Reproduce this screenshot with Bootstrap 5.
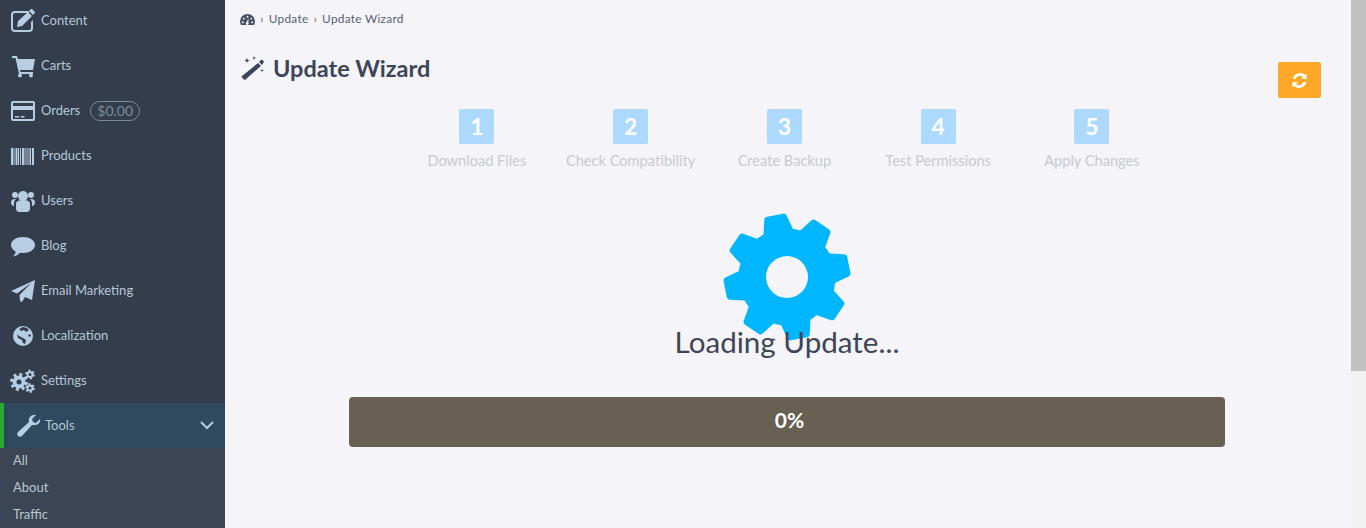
<!DOCTYPE html>
<html>
<head>
    <title>Update Wizard</title>
    <link href="https://cdn.jsdelivr.net/npm/bootstrap@5.3.0/dist/css/bootstrap.min.css" rel="stylesheet">
    <style>
        html, body { height: 528px; overflow: hidden; }
        body { font-family: "Lato", "Noto Sans", sans-serif; background: #f4f4f9; color: #3f4654; font-size: 13px; }
        .app-shell { height: 528px; }
        .side-menu { width: 225px; background: #333d4b; flex-shrink: 0; overflow: hidden; padding-top: 0; }
        .side-link { height: 45px; color: #b6c8da; font-size: 13px; padding-left: 10px; text-decoration: none; }
        .side-link:first-child { margin-top: -2px; }
        .side-link svg { width: 26px; height: 24px; fill: #b6cde3; margin-right: 5px; flex-shrink: 0; }
        .side-link.is-open { background: #2f4a5f; border-left: 4px solid #2aa82f; padding-left: 12px; padding-right: 11px; }
        .side-link.is-open svg.tool-ico { margin-right: 3px; }
        .side-link .chev { width: 14px; height: 10px; margin: 0 0 2px 0; fill: none; stroke: #b6cde3; stroke-width: 2; }
        .money-pill { border: 1px solid #7c8997; border-radius: 10px; color: #7f8c9a; font-size: 14px; width: 50px; text-align: center; height: 20px; line-height: 18px; margin-left: 10px; }
        .side-sub { background: #3c4553; }
        .side-sub a { display: block; height: 27px; line-height: 24px; padding-left: 13px; color: #b9c5d2; text-decoration: none; }
        .main-pane { background: #f4f4f9; }
        .crumbs { height: 38px; padding-left: 15px; font-size: 11.8px; color: #5a5f70; letter-spacing: .3px; }
        .crumbs svg { width: 15px; height: 13px; fill: #4a5160; }
        .crumbs i { font-style: normal; font-size: 12px; margin: 0 5px; }
        .page-head { height: 60px; padding: 0 30px 0 15px; }
        .page-head h1 { font-size: 23.5px; font-weight: 700; margin: 0; color: #3e4557; }
        .page-head svg { width: 24px; height: 24px; margin-right: 9px; fill: #3e4557; }
        .refresh-btn { width: 43px; height: 36px; background: #ffa726; border: 0; border-radius: 2px; padding: 0; margin-top: 24px; }
        .refresh-btn svg { width: 15px; height: 15px; margin: 0; fill: #fff; }
        .wizard-steps { width: 769px; margin-left: 175px; margin-top: 11px; }
        .wiz-step { width: 153.75px; text-align: center; color: #c9cacf; font-size: 14.6px; }
        .wiz-num { width: 35px; height: 35px; line-height: 35px; border-radius: 2px; background: #acd9fd; color: #fff; font-weight: 700; font-size: 23px; margin: 0 auto 6px; }
        .gear-box { height: 225px; padding: 40px 2px 0 0; position: relative; }
        .gear-box svg { width: 130px; height: 130px; fill: #00b7ff; display: block; margin: 0 auto; }
        .load-title { position: absolute; left: 0; right: 2px; top: 150px; text-align: center; font-size: 29.6px; line-height: 40px; color: #3e4557; }
        .bar-wrap { width: 876px; height: 50px; margin-left: 124px; padding: 0 0 4px 5px; background: #686052; border-radius: 4px; color: #fff; font-size: 21px; font-weight: 700; }
        .fake-scroll { width: 15px; background: #f1f1f1; flex-shrink: 0; }
        .fake-scroll div { height: 371px; background: #c1c1c1; }
    </style>
</head>
<body>
<div class="app-shell d-flex">
    <nav class="side-menu">
        <a class="side-link d-flex align-items-center" href="#"><svg viewBox="0 0 26 24"><path d="M4 2h15v2H5a2 2 0 0 0-2 2v13a2 2 0 0 0 2 2h14a2 2 0 0 0 2-2v-6l2-2v8a4 4 0 0 1-4 4H5a4 4 0 0 1-4-4V6a4 4 0 0 1 4-4z"/><path d="M8 12 18 3l4 4-10 10-5 1zM19 2l1.500-1.500c.6-.6 1.500-.6 2 0l2 2c.6.6.6 1.500 0 2L23 6z"/></svg>Content</a>
        <a class="side-link d-flex align-items-center" href="#"><svg viewBox="0 0 26 24"><path d="M2 2h5l1 3h17l-2 11H10l.5 2H23v2H9L5.500 4H2z"/><circle cx="10" cy="21.500" r="2"/><circle cx="21" cy="21.500" r="2"/></svg>Carts</a>
        <a class="side-link d-flex align-items-center" href="#"><svg viewBox="0 0 26 24"><path d="M3 2h20a2 2 0 0 1 2 2v16a2 2 0 0 1-2 2H3a2 2 0 0 1-2-2V4a2 2 0 0 1 2-2zm0 2v3h20V4zm0 7v9h20v-9zm2 6h4v1.500H5zm5.500 0h4v1.500h-4z" fill-rule="evenodd"/></svg>Orders<span class="money-pill">$0.00</span></a>
        <a class="side-link d-flex align-items-center" href="#"><svg viewBox="0 0 26 24"><path d="M1 1h2v17H1zm2.500 0h1v17h-1zm2 0h2v17h-2zm2.500 0h1v17H8zm2 0h1v17h-1zm2 0h2v17h-2zm2.500 0h1v17h-1zm2 0h1v17h-1zm2 0h1v17h-1zm1.500 0h1v17h-1zm2 0h2v17h-2z" transform="translate(0 3)"/></svg>Products</a>
        <a class="side-link d-flex align-items-center" href="#"><svg viewBox="0 0 26 24"><circle cx="13" cy="7" r="5"/><circle cx="5" cy="6" r="3"/><circle cx="21" cy="6" r="3"/><path d="M6 15c0-3 3-4 7-4s7 1 7 4v5c0 2-2 3-3 3H9c-1 0-3-1-3-3z"/><path d="M5 10c-2 0-4 1-4 3 0 2 1 4 3 4V14c0-2 1-3 2-4zM21 10c2 0 4 1 4 3 0 2-1 4-3 4V14c0-2-1-3-2-4z"/></svg>Users</a>
        <a class="side-link d-flex align-items-center" href="#"><svg viewBox="0 0 26 24"><path d="M13 3c6.600 0 12 3.400 12 8s-5.400 8-12 8c-1 0-2 0-3-.2C8 21 5 22.500 3 22.500c1-1 2.500-3 2.700-5C3 16 1 13.700 1 11c0-4.600 5.400-8 12-8z"/></svg>Blog</a>
        <a class="side-link d-flex align-items-center" href="#"><svg viewBox="0 0 26 24"><path d="M25 1 22 21l-7-3-3 5-2-1-.5-6L21 4 7 14.500 1 12z"/></svg>Email Marketing</a>
        <a class="side-link d-flex align-items-center" href="#"><svg viewBox="0 0 26 24"><path fill-rule="evenodd" d="M13 2a10 10 0 1 1 0 20 10 10 0 0 1 0-20zM9 5l2 2 3-1 2 2 3-2-2-2-4-1zM7 10l1 4 4 2 1 3 2 1 1-4-3-2-4-2zM18 12l2 1 1-2-2-1z"/></svg>Localization</a>
        <a class="side-link d-flex align-items-center" href="#"><svg viewBox="0 0 26 24"><circle cx="9" cy="13" r="4.500" fill="none" stroke="#b6cde3" stroke-width="4"/><circle cx="9" cy="13" r="7.500" fill="none" stroke="#b6cde3" stroke-width="3" stroke-dasharray="3 2.900"/><circle cx="20" cy="5.500" r="2.500" fill="none" stroke="#b6cde3" stroke-width="2"/><circle cx="20" cy="5.500" r="4" fill="none" stroke="#b6cde3" stroke-width="1.800" stroke-dasharray="2 2.200"/><circle cx="20" cy="19" r="2.500" fill="none" stroke="#b6cde3" stroke-width="2"/><circle cx="20" cy="19" r="4" fill="none" stroke="#b6cde3" stroke-width="1.800" stroke-dasharray="2 2.200"/></svg>Settings</a>
        <a class="side-link is-open d-flex align-items-center" href="#"><svg class="tool-ico" viewBox="0 0 26 24"><path d="M24 5l-4 4-3-1-1-3 4-4c-4-1-8 2-7 7L2 18c-1 1-1 3 0 4s3 1 4 0L16 11c5 1 9-2 8-6z"/></svg>Tools<svg class="chev ms-auto" viewBox="0 0 14 10"><path d="M1 2l6 6 6-6"/></svg></a>
        <div class="side-sub">
            <a href="#">All</a>
            <a href="#">About</a>
            <a href="#">Traffic</a>
        </div>
    </nav>
    <main class="main-pane flex-grow-1">
        <div class="crumbs d-flex align-items-center">
            <svg viewBox="0 0 16 14"><path fill-rule="evenodd" d="M8 1a8 8 0 0 1 8 8c0 1.500-.4 3-1 4H1c-.6-1-1-2.500-1-4a8 8 0 0 1 8-8zM8 3a1 1 0 1 0 0 2 1 1 0 0 0 0-2zM4 5a1 1 0 1 0 0 2 1 1 0 0 0 0-2zm8 0a1 1 0 1 0 0 2 1 1 0 0 0 0-2zM3 9a1 1 0 1 0 0 2 1 1 0 0 0 0-2zm10 0a1 1 0 1 0 0 2 1 1 0 0 0 0-2zM9 6 7 10a1.500 1.500 0 1 0 2 .5z"/></svg>
            <i>›</i><span>Update</span><i>›</i><span>Update Wizard</span>
        </div>
        <div class="page-head d-flex justify-content-between align-items-start">
            <div class="d-flex align-items-center pt-3">
                <svg viewBox="0 0 24 24"><path d="M18 7l3 3L5.500 23.500c-.5.500-1 .5-1.500 0l-2-2c-.5-.5-.5-1 0-1.500zM19 6l2-2c.5-.5 1-.5 1.500 0l1 1c.5.500.5 1 0 1.500L22 9z"/><path d="M7 2l.8 1.800L9.500 4.500l-1.700.7L7 7l-.8-1.800L4.500 4.500l1.700-.7zM14 0l.5 1.500L16 2l-1.500.5L14 4l-.5-1.500L12 2l1.500-.5zM22 13l.5 1 1.500.5-1.500.5-.5 1-.5-1-1.500-.5 1.500-.5z"/></svg>
                <h1>Update Wizard</h1>
            </div>
            <button class="refresh-btn d-flex align-items-center justify-content-center" type="button"><svg viewBox="0 0 16 16"><path d="M15.500 .5v6h-6l2.200-2.200A4.700 4.700 0 0 0 4 6.500H.8a7.800 7.800 0 0 1 13-4.300zM.5 15.500v-6h6l-2.200 2.200A4.700 4.700 0 0 0 12 9.500h3.200a7.800 7.800 0 0 1-13 4.300z"/></svg></button>
        </div>
        <div class="wizard-steps d-flex">
            <div class="wiz-step"><div class="wiz-num">1</div>Download Files</div>
            <div class="wiz-step"><div class="wiz-num">2</div>Check Compatibility</div>
            <div class="wiz-step"><div class="wiz-num">3</div>Create Backup</div>
            <div class="wiz-step"><div class="wiz-num">4</div>Test Permissions</div>
            <div class="wiz-step"><div class="wiz-num">5</div>Apply Changes</div>
        </div>
        <div class="gear-box">
            <svg viewBox="-65 -65 130 130">
                <defs><path id="gear-tooth" d="M-16 -42-11.500 -60Q-11 -63 -8 -63H8Q11 -63 11.500 -60L16 -42Z"/></defs>
                <g transform="rotate(-11)">
                    <path fill-rule="evenodd" d="M0-48.500a48.500 48.500 0 1 1 0 97 48.500 48.500 0 0 1 0-97zM0-21a21 21 0 1 0 0 42 21 21 0 0 0 0-42z"/>
                    <use href="#gear-tooth"/>
                    <use href="#gear-tooth" transform="rotate(45)"/>
                    <use href="#gear-tooth" transform="rotate(90)"/>
                    <use href="#gear-tooth" transform="rotate(135)"/>
                    <use href="#gear-tooth" transform="rotate(180)"/>
                    <use href="#gear-tooth" transform="rotate(225)"/>
                    <use href="#gear-tooth" transform="rotate(270)"/>
                    <use href="#gear-tooth" transform="rotate(315)"/>
                </g>
            </svg>
            <div class="load-title">Loading Update...</div>
        </div>
        <div class="bar-wrap d-flex align-items-center justify-content-center">0%</div>
    </main>
    <div class="fake-scroll"><div></div></div>
</div>
<script src="https://cdn.jsdelivr.net/npm/bootstrap@5.3.0/dist/js/bootstrap.bundle.min.js"></script>
</body>
</html>
